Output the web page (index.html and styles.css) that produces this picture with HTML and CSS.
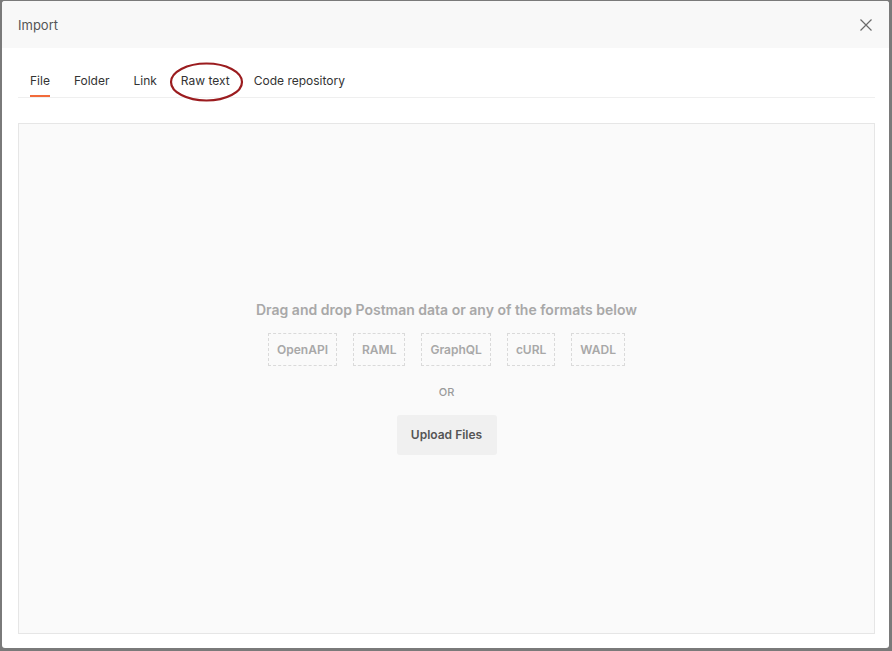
FILE: index.html
```html
<!DOCTYPE html>
<html lang="en">
<head>
    <meta charset="UTF-8">
    <meta name="viewport" content="width=device-width, initial-scale=1.0">
    <title>Import</title>
    <link rel="stylesheet" href="styles.css">
</head>
<body>

<div class="modal">
    <!-- Header -->
    <div class="modal-header">
        <span class="modal-title">Import</span>
        <svg class="close" width="12" height="12" viewBox="0 0 12 12">
            <path d="M0.5 0.5 L11.5 11.5 M11.5 0.5 L0.5 11.5" stroke="#6b6b6b" stroke-width="1.2" fill="none"/>
        </svg>
    </div>

    <div class="modal-body">
        <!-- Tabs -->
        <div class="tabs">
            <div class="tab active">File</div>
            <div class="tab">Folder</div>
            <div class="tab">Link</div>
            <div class="tab">Raw text
                <svg class="circle" width="75" height="40" viewBox="0 0 75 40">
                    <ellipse cx="37.5" cy="20" rx="35.5" ry="18.5" stroke="#9b1c1f" stroke-width="2.2" fill="none"/>
                </svg>
            </div>
            <div class="tab">Code repository</div>
        </div>

        <!-- Drop zone -->
        <div class="dropzone">
            <p class="drop-title">Drag and drop Postman data or any of the formats below</p>
            <div class="formats">
                <span class="format">OpenAPI</span>
                <span class="format">RAML</span>
                <span class="format">GraphQL</span>
                <span class="format">cURL</span>
                <span class="format">WADL</span>
            </div>
            <p class="or">OR</p>
            <button class="upload">Upload Files</button>
        </div>
    </div>
</div>

</body>
</html>
```

FILE: styles.css
```css
body {
    margin: 0;
    padding: 1px 3px 3px 2px;
    background-color: #7a7a7a;
    font-family: Inter, "Noto Sans", sans-serif;
    height: 651px;
    box-sizing: border-box;
}
.modal {
    background-color: white;
    border-radius: 3px;
    height: 647px;
    display: flex;
    flex-direction: column;
    overflow: hidden;
}
.modal-header {
    background-color: #f8f8f8;
    height: 47px;
    display: flex;
    align-items: center;
    justify-content: space-between;
    padding: 0 17px 0 16px;
    flex-shrink: 0;
}
.modal-title {
    font-size: 13px;
    color: #555;
}
.close {
    display: block;
}
.modal-body {
    flex: 1;
    display: flex;
    flex-direction: column;
    padding: 0 14px 14px 16px;
}
.tabs {
    display: flex;
    border-bottom: 1px solid #efefef;
    margin-top: 21px;
    height: 28px;
}
.tab {
    position: relative;
    margin: 0 12px;
    padding-top: 1px;
    font-size: 12px;
    color: #333;
    line-height: 22px;
    height: 28px;
    box-sizing: border-box;
}
.tab.active {
    border-bottom: 2px solid #f26b3a;
}
.circle {
    position: absolute;
    left: -12px;
    top: -7px;
}
.dropzone {
    margin-top: 25px;
    flex: 1;
    background-color: #fafafa;
    border: 1px solid #e6e6e6;
    display: flex;
    flex-direction: column;
    align-items: center;
    justify-content: center;
    padding-bottom: 2px;
}
.drop-title {
    margin: 0;
    font-size: 14px;
    font-weight: 600;
    color: #a8a8a8;
}
.formats {
    display: flex;
    gap: 16px;
    margin-top: 15px;
}
.format {
    border: 1px dashed #dadada;
    padding: 0 8px;
    height: 33px;
    box-sizing: border-box;
    display: flex;
    align-items: center;
    font-size: 12px;
    font-weight: 600;
    color: #a8a8a8;
}
.or {
    margin: 19px 0 0;
    font-size: 11px;
    font-weight: 500;
    color: #9a9a9a;
}
.upload {
    margin-top: 16px;
    width: 100px;
    height: 40px;
    border: none;
    border-radius: 3px;
    background-color: #f0f0f0;
    font-family: inherit;
    font-size: 12px;
    font-weight: 600;
    color: #555;
}
```
